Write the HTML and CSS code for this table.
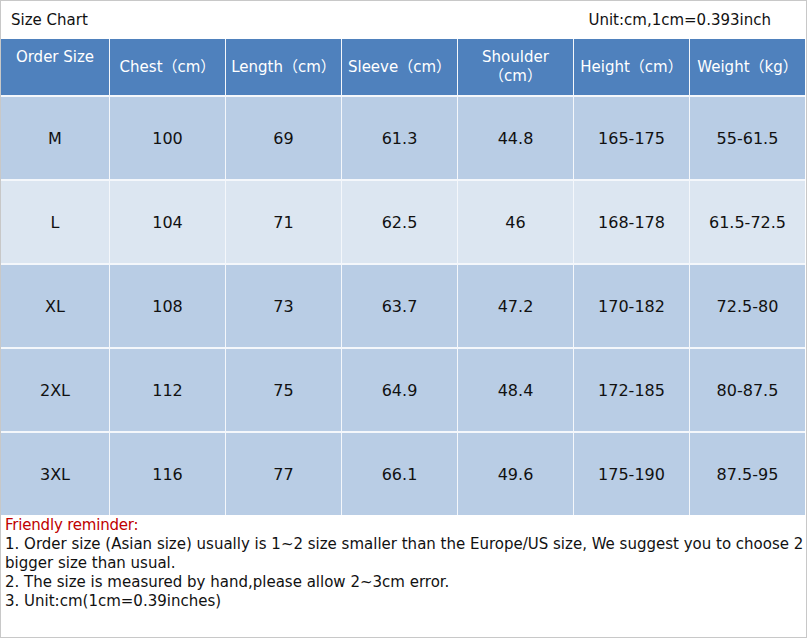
FILE: index.html
```html
<!DOCTYPE html>
<html>
<head>
<meta charset="utf-8">
<link rel="stylesheet" href="styles.css">
</head>
<body>
<div class="chart">
  <div class="title-bar">
    <span class="title">Size Chart</span>
    <span class="unit">Unit:cm,1cm=0.393inch</span>
  </div>
  <div class="grid">
    <div class="th th-top">Order Size</div>
    <div class="th">Chest（cm）</div>
    <div class="th">Length（cm）</div>
    <div class="th">Sleeve（cm）</div>
    <div class="th">Shoulder<br>（cm）</div>
    <div class="th">Height（cm）</div>
    <div class="th">Weight（kg）</div>

    <div class="td odd">M</div><div class="td odd">100</div><div class="td odd">69</div><div class="td odd">61.3</div><div class="td odd">44.8</div><div class="td odd">165-175</div><div class="td odd">55-61.5</div>
    <div class="td even">L</div><div class="td even">104</div><div class="td even">71</div><div class="td even">62.5</div><div class="td even">46</div><div class="td even">168-178</div><div class="td even">61.5-72.5</div>
    <div class="td odd">XL</div><div class="td odd">108</div><div class="td odd">73</div><div class="td odd">63.7</div><div class="td odd">47.2</div><div class="td odd">170-182</div><div class="td odd">72.5-80</div>
    <div class="td odd">2XL</div><div class="td odd">112</div><div class="td odd">75</div><div class="td odd">64.9</div><div class="td odd">48.4</div><div class="td odd">172-185</div><div class="td odd">80-87.5</div>
    <div class="td odd">3XL</div><div class="td odd">116</div><div class="td odd">77</div><div class="td odd">66.1</div><div class="td odd">49.6</div><div class="td odd">175-190</div><div class="td odd">87.5-95</div>
  </div>
  <div class="notes">
    <div class="reminder">Friendly reminder:</div>
    <div>1. Order size (Asian size) usually is 1~2 size smaller than the Europe/US size, We suggest you to choose 2 bigger size than usual.</div>
    <div>2. The size is measured by hand,please allow 2~3cm error.</div>
    <div>3. Unit:cm(1cm=0.39inches)</div>
  </div>
</div>
</body>
</html>
```

FILE: styles.css
```css
html, body {
  margin: 0;
  padding: 0;
  background: #ffffff;
}

.chart {
  width: 805px;
  height: 636px;
  border: 1px solid #c8c8c8;
  font-family: "DejaVu Sans", "Noto Sans CJK SC", sans-serif;
  color: #111111;
  display: flex;
  flex-direction: column;
}

.title-bar {
  height: 38px;
  display: flex;
  align-items: center;
  justify-content: space-between;
  padding: 0 35px 0 10px;
  font-size: 15px;
}

.grid {
  display: grid;
  grid-template-columns: 108px repeat(6, 115px);
  grid-template-rows: 56px repeat(5, 82px);
  column-gap: 1px;
  row-gap: 2px;
  width: 804px;
  background: #f4f7fb;
}

.th {
  background: #4f81bd;
  color: #ffffff;
  font-size: 15px;
  line-height: 19px;
  display: flex;
  align-items: center;
  justify-content: center;
  text-align: center;
}

.th-top {
  align-items: flex-start;
  padding-top: 9px;
}

.td {
  font-size: 16px;
  display: flex;
  align-items: center;
  justify-content: center;
  color: #111111;
}

.odd {
  background: #b9cde5;
}

.even {
  background: #dce6f1;
}

.notes {
  padding: 1px 0 0 4px;
  font-size: 15px;
  line-height: 19px;
  color: #111111;
}

.reminder {
  color: #c00000;
  letter-spacing: -0.2px;
}
```
